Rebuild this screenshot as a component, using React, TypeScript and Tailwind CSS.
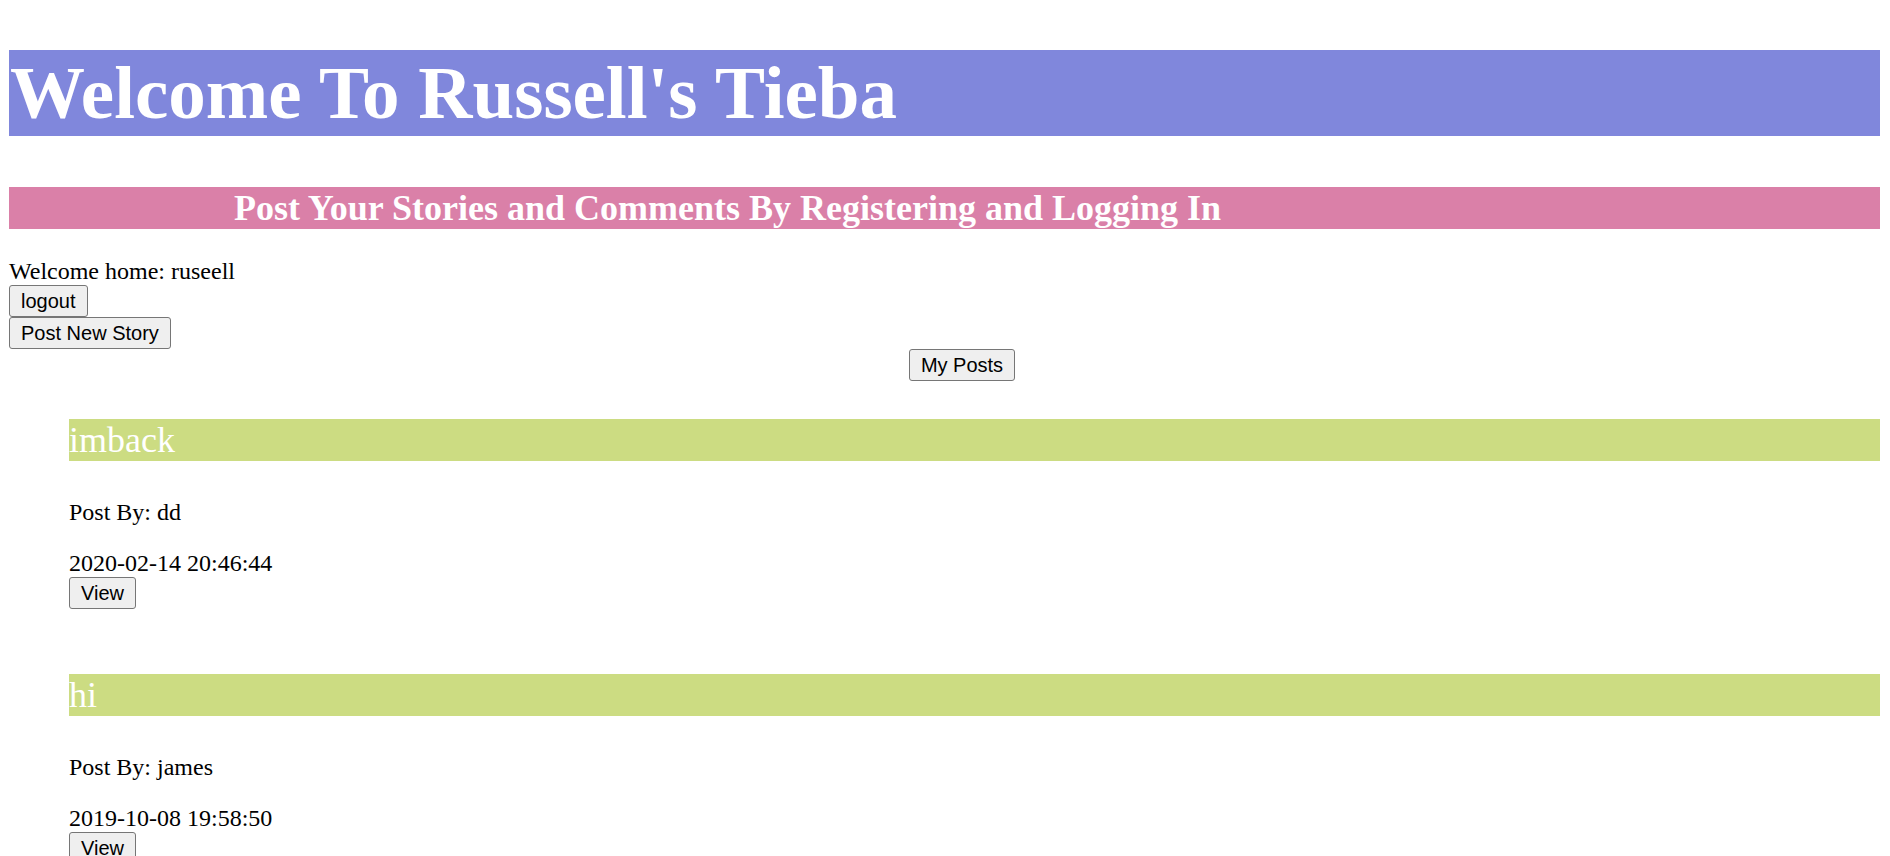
export default function App() {
  const posts = [
    { title: "imback", author: "dd", time: "2020-02-14 20:46:44" },
    { title: "hi", author: "james", time: "2019-10-08 19:58:50" },
  ];

  const btn =
    "h-[32px] px-[11px] bg-[#efefef] border border-[#767676] rounded-[3px] text-[20px] leading-[23px] text-black font-['Liberation_Sans',Arial,sans-serif]";

  return (
    <div className="min-h-screen bg-white pl-[9px] pr-[10px] pt-[50px] font-['Liberation_Serif','Times_New_Roman',serif] text-black">
      <h1 className="bg-[#8087dc] text-white font-bold text-[75px] leading-[86px] pl-px">
        Welcome To Russell's Tieba
      </h1>

      <h2 className="mt-[51px] bg-[#da80a8] text-white font-bold text-[36px] leading-[42px] pl-[225px]">
        Post Your Stories and Comments By Registering and Logging In
      </h2>

      <div className="mt-[28px] text-[24px] leading-[28px]">Welcome home: ruseell</div>
      <div className="flex flex-col items-start">
        <button className={btn}>logout</button>
        <button className={btn}>Post New Story</button>
      </div>
      <div className="flex justify-center pl-[35px]">
        <button className={btn}>My Posts</button>
      </div>

      <div className="pl-[60px] mt-[38px]">
        {posts.map((p, i) => (
          <div key={i} className="mb-[65px]">
            <div className="bg-[#ccdc82] text-white text-[36px] leading-[42px]">{p.title}</div>
            <p className="mt-[37px] text-[24px] leading-[28px]">Post By: {p.author}</p>
            <div className="mt-[23px] text-[24px] leading-[28px]">{p.time}</div>
            <button className={btn}>View</button>
          </div>
        ))}
      </div>
    </div>
  );
}
